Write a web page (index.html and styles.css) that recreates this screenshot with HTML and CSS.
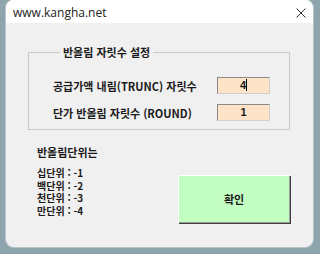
FILE: index.html
```html
<!DOCTYPE html>
<html lang="ko">
<head>
    <meta charset="UTF-8">
    <meta name="viewport" content="width=device-width, initial-scale=1.0">
    <title>반올림 자릿수 설정</title>
    <link rel="stylesheet" href="styles.css">
</head>
<body>
    <div class="win">
        <div class="titlebar">
            <span class="title">www.kangha.net</span>
            <svg class="close" width="10" height="10" viewBox="0 0 10 10">
                <path d="M0.5 0.5 L9.5 9.5 M9.5 0.5 L0.5 9.5" stroke="#333" stroke-width="1" fill="none"/>
            </svg>
        </div>
        <div class="content">
            <fieldset class="group">
                <legend>반올림 자릿수 설정</legend>
                <div class="rows">
                    <label>공급가액 내림(TRUNC) 자릿수</label>
                    <div class="num">4<span class="caret"></span></div>
                    <label>단가 반올림 자릿수 (ROUND)</label>
                    <div class="num">1</div>
                </div>
            </fieldset>
            <div class="lower">
                <div class="notes">
                    <p class="head">반올림단위는</p>
                    <p>십단위 : -1</p>
                    <p>백단위 : -2</p>
                    <p>천단위 : -3</p>
                    <p>만단위 : -4</p>
                </div>
                <button class="ok">확인</button>
            </div>
        </div>
    </div>
</body>
</html>
```

FILE: styles.css
```css
body {
    margin: 0;
    background: #8ea5ad;
    width: 320px;
    height: 254px;
    overflow: hidden;
    font-family: "Noto Sans CJK KR", "Noto Sans", sans-serif;
    color: #1a1a1a;
}
.win {
    margin-left: 6px;
    width: 307px;
    height: 247px;
    background: #f0f0f0;
    border-radius: 8px;
    overflow: hidden;
    box-shadow: 0 0 0 1px #b9c6cb;
}
.titlebar {
    height: 23px;
    background: #fff;
    display: flex;
    align-items: center;
    justify-content: space-between;
    padding: 0 7px 0 7px;
}
.title {
    font-family: "Open Sans", "Noto Sans", sans-serif;
    font-size: 12px;
    color: #222;
    margin-top: 2px;
}
.close {
    margin-top: 2px;
}
.content {
    padding: 22px 23px 0 22px;
}
.group {
    margin: 0;
    padding: 18px 0 0 24px;
    width: 262px;
    height: 85px;
    box-sizing: border-box;
    border: 1px solid #c9c9c9;
    border-radius: 0;
}
.group legend {
    margin-left: 7px;
    padding: 0 3px;
    font-size: 11px;
    font-weight: bold;
    line-height: 14px;
}
.rows {
    display: grid;
    grid-template-columns: 164px 53px;
    row-gap: 10px;
    align-items: center;
}
.rows label {
    font-size: 11px;
    font-weight: bold;
}
.num {
    height: 17px;
    box-sizing: border-box;
    background: #fde3c8;
    border: 1px solid #8a8a8a;
    border-right-color: #cfcfcf;
    border-bottom-color: #cfcfcf;
    text-align: center;
    font-family: "Liberation Sans", sans-serif;
    font-weight: bold;
    font-size: 11px;
    line-height: 15px;
}
.caret {
    display: inline-block;
    width: 1px;
    height: 12px;
    background: #000;
    vertical-align: -2px;
}
.lower {
    display: flex;
    margin-top: 15px;
}
.notes {
    width: 144px;
    margin-left: 9px;
    font-size: 10px;
    font-weight: bold;
}
.notes p {
    margin: 0;
    line-height: 12.5px;
}
.notes .head {
    font-size: 11px;
    line-height: 14px;
    margin-bottom: 8px;
}
.ok {
    margin-top: 30px;
    width: 114px;
    height: 48px;
    background: #c2fdc2;
    border: none;
    box-shadow: inset 1px 1px 0 #fff, inset -1px -1px 0 #9a9a9a, 1px 1px 0 #404040;
    font-family: "Noto Sans CJK KR", sans-serif;
    font-size: 11px;
    font-weight: bold;
    color: #1a1a1a;
    padding: 0;
}
```
